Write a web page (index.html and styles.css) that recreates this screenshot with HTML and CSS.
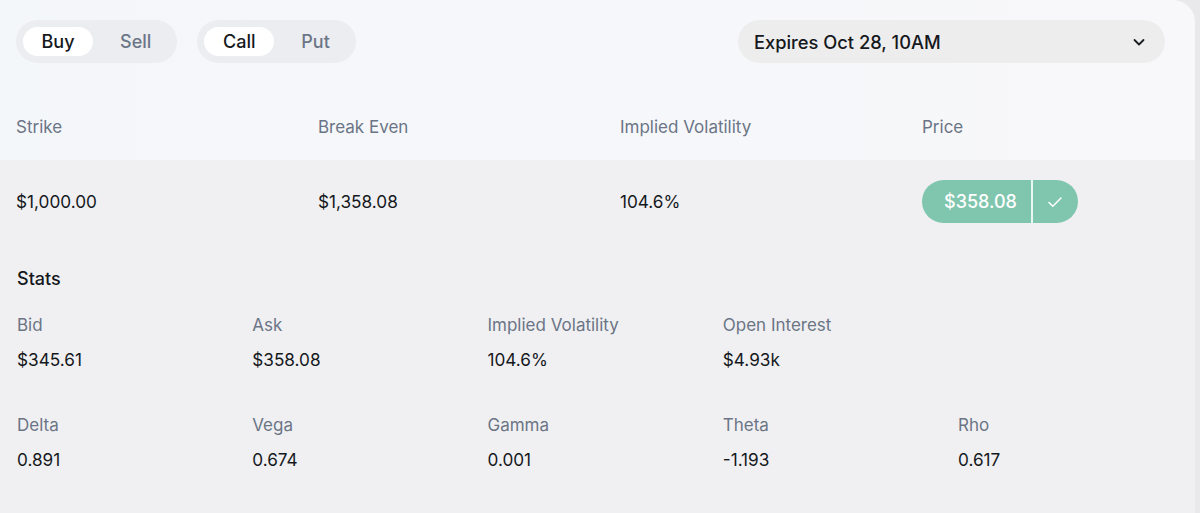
FILE: index.html
```html
<!DOCTYPE html>
<html>
<head>
<meta charset="utf-8">
<link rel="stylesheet" href="styles.css">
</head>
<body>
<div class="card">
  <div class="top">
    <div class="controls">
      <div class="toggle">
        <span class="opt active">Buy</span>
        <span class="opt">Sell</span>
      </div>
      <div class="toggle">
        <span class="opt active">Call</span>
        <span class="opt">Put</span>
      </div>
      <div class="select">
        <span>Expires Oct 28, 10AM</span>
        <svg width="16" height="16" viewBox="0 0 16 16"><path d="M3.5 6l4.5 4.5 4.5-4.5" fill="none" stroke="#1a1d21" stroke-width="1.8" stroke-linecap="round" stroke-linejoin="round"/></svg>
      </div>
    </div>
    <div class="cols head">
      <div class="label">Strike</div>
      <div class="label">Break Even</div>
      <div class="label">Implied Volatility</div>
      <div class="label">Price</div>
    </div>
  </div>
  <div class="bottom">
    <div class="cols row">
      <div class="value">$1,000.00</div>
      <div class="value">$1,358.08</div>
      <div class="value">104.6%</div>
      <div>
        <div class="price-btn">
          <span class="price">$358.08</span>
          <span class="check"><svg width="18" height="18" viewBox="0 0 18 18"><path d="M3 9.5l3.8 3.8L15 5" fill="none" stroke="#fff" stroke-width="1.5" stroke-linecap="round" stroke-linejoin="round"/></svg></span>
        </div>
      </div>
    </div>
    <h2 class="stats-title">Stats</h2>
    <div class="stats">
      <div class="stat"><div class="label">Bid</div><div class="value">$345.61</div></div>
      <div class="stat"><div class="label">Ask</div><div class="value">$358.08</div></div>
      <div class="stat"><div class="label">Implied Volatility</div><div class="value">104.6%</div></div>
      <div class="stat"><div class="label">Open Interest</div><div class="value">$4.93k</div></div>
      <div class="stat"></div>
      <div class="stat"><div class="label">Delta</div><div class="value">0.891</div></div>
      <div class="stat"><div class="label">Vega</div><div class="value">0.674</div></div>
      <div class="stat"><div class="label">Gamma</div><div class="value">0.001</div></div>
      <div class="stat"><div class="label">Theta</div><div class="value">-1.193</div></div>
      <div class="stat"><div class="label">Rho</div><div class="value">0.617</div></div>
    </div>
  </div>
</div>
</body>
</html>
```

FILE: styles.css
```css
* { box-sizing: border-box; }
html, body { margin: 0; padding: 0; }
body {
  background: #e9e9eb;
  font-family: Inter, "Noto Sans", sans-serif;
  color: #15181c;
  width: 1200px;
  height: 513px;
  overflow: hidden;
}
.card {
  width: 1195px;
  height: 513px;
  border-top-right-radius: 22px;
  overflow: hidden;
  display: flex;
  flex-direction: column;
}
.top {
  height: 160px;
  background: linear-gradient(90deg, #f4f7fa 0%, #f6f7fa 50%, #f8f8fa 100%);
  padding: 20px 16px 0 16px;
}
.controls {
  display: flex;
  align-items: center;
  gap: 20px;
}
.toggle {
  display: flex;
  align-items: center;
  height: 43px;
  padding: 7px;
  background: #ebedf0;
  border-radius: 22px;
}
.opt {
  height: 29px;
  line-height: 29px;
  font-size: 18px;
  font-weight: 500;
  color: #6b7687;
  border-radius: 15px;
  padding: 0 19px 0 27px;
}
.opt.active {
  background: #fff;
  color: #15181c;
  width: 70px;
  padding: 0;
  text-align: center;
}
.select {
  margin-left: auto;
  margin-right: 14px;
  width: 427px;
  height: 43px;
  background: #ededee;
  border-radius: 22px;
  display: flex;
  align-items: center;
  justify-content: space-between;
  padding: 0 18px 0 16px;
  font-size: 18.3px;
  font-weight: 500;
  color: #15181c;
}
.cols {
  display: grid;
  grid-template-columns: 302px 302px 302px 302px;
}
.head { margin-top: 52px; }
.label {
  font-size: 17px;
  line-height: 24px;
  color: #6b7586;
}
.value {
  font-size: 17.2px;
  line-height: 24px;
  color: #15181c;
}
.bottom {
  flex: 1;
  background: #f0f0f2;
  padding: 20px 16px 0 16px;
}
.row { align-items: center; }
.price-btn {
  display: inline-flex;
  height: 43px;
  width: 156px;
  border-radius: 22px;
  background: #80c6ae;
  overflow: hidden;
}
.price {
  width: 111px;
  display: flex;
  align-items: center;
  justify-content: center;
  padding-left: 8px;
  color: #fff;
  font-size: 18px;
  font-weight: 500;
  border-right: 2px solid #e9f6f1;
}
.check {
  flex: 1;
  display: flex;
  align-items: center;
  justify-content: center;
  padding-right: 2px;
}
.stats-title {
  margin: 44px 0 0 1px;
  font-size: 18px;
  line-height: 24px;
  font-weight: 500;
  color: #15181c;
}
.stats {
  display: grid;
  grid-template-columns: repeat(5, 235.25px);
  row-gap: 41px;
  margin-top: 22px;
  padding-left: 1px;
}
.stat .value { margin-top: 11px; }
```
